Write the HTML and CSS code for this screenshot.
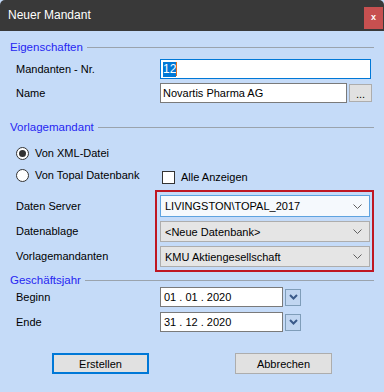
FILE: index.html
```html
<!DOCTYPE html>
<html lang="de">
<head>
<meta charset="UTF-8">
<meta name="viewport" content="width=device-width, initial-scale=1.0">
<title>Neuer Mandant</title>

<link rel="stylesheet" href="styles.css">

</head>
<body>

<div class="window">
  <div class="titlebar">
    <span class="title">Neuer Mandant</span>
    <span class="close">x</span>
  </div>

  <div class="content">
    <div class="group-title">Eigenschaften</div>
    <div class="row first">
      <span class="label">Mandanten - Nr.</span>
      <div class="textbox focus nr"><span class="sel">12</span><span class="caret"></span></div>
    </div>
    <div class="row">
      <span class="label">Name</span>
      <div class="textbox name">Novartis Pharma AG</div>
      <span class="dots">...</span>
    </div>

    <div class="group-title second">Vorlagemandant</div>
    <div class="radio-row xml">
      <span class="radio-cell"><span class="radio checked"></span>Von XML-Datei</span>
    </div>
    <div class="radio-row">
      <span class="radio-cell"><span class="radio"></span>Von Topal Datenbank</span>
      <span class="check-cell"><span class="check"></span>Alle Anzeigen</span>
    </div>

    <div class="db-block">
      <div class="db-labels">
        <span class="l1">Daten Server</span>
        <span>Datenablage</span>
        <span>Vorlagemandanten</span>
      </div>
      <div class="highlight">
        <div class="combo active c1">LIVINGSTON\TOPAL_2017<svg viewBox="0 0 9 5"><path d="M0.5 0.5 L4.5 4.5 L8.5 0.5" /></svg></div>
        <div class="combo">&lt;Neue Datenbank&gt;<svg viewBox="0 0 9 5"><path d="M0.5 0.5 L4.5 4.5 L8.5 0.5" /></svg></div>
        <div class="combo">KMU Aktiengesellschaft<svg viewBox="0 0 9 5"><path d="M0.5 0.5 L4.5 4.5 L8.5 0.5" /></svg></div>
      </div>
    </div>

    <div class="group-title third">Geschäftsjahr</div>
    <div class="row date-row">
      <span class="label">Beginn</span>
      <div class="textbox date">01 . 01 . 2020</div>
      <span class="date-btn"><svg viewBox="0 0 9 6"><path d="M1 1 L4.5 4.5 L8 1" /></svg></span>
    </div>
    <div class="row date-row end">
      <span class="label">Ende</span>
      <div class="textbox date">31 . 12 . 2020</div>
      <span class="date-btn"><svg viewBox="0 0 9 6"><path d="M1 1 L4.5 4.5 L8 1" /></svg></span>
    </div>

    <div class="buttons">
      <button class="btn default">Erstellen</button>
      <button class="btn">Abbrechen</button>
    </div>
  </div>
</div>

</body>
</html>
```

FILE: styles.css
```css
/* Global Styles */
body {
  font-family: "Liberation Sans", Arial, sans-serif;
  font-size: 11px;
  color: #000;
  margin: 0;
  padding: 0;
  background-color: #c5dbf8;
}
.window {
  width: 384px;
  height: 392px;
  background-color: #c5dbf8;
  overflow: hidden;
}

/* Title bar */
.titlebar {
  display: flex;
  height: 31px;
  background-color: #393939;
  color: #fff;
  border-radius: 5px 5px 0 0;
}
.title {
  font-size: 12px;
  line-height: 31px;
  padding-left: 8px;
}
.close {
  margin-left: auto;
  margin-top: 7px;
  margin-right: 1px;
  width: 19px;
  height: 22px;
  background-color: #c75050;
  font-weight: bold;
  font-size: 9px;
  line-height: 21px;
  text-align: center;
}

/* Content */
.content {
  padding: 9px 10px 0 10px;
}
.group-title {
  display: flex;
  align-items: center;
  height: 14px;
  color: #2626f2;
  font-size: 11.5px;
}
.group-title::after {
  content: "";
  flex: 1;
  margin-left: 4px;
  border-top: 1px solid #9aa3ad;
}
.group-title.second {
  margin-top: 17px;
}
.group-title.third {
  margin-top: 1px;
}
.row {
  display: flex;
  align-items: center;
  height: 20px;
  margin-top: 4px;
  padding-left: 6px;
}
.row.first {
  margin-top: 5px;
}
.label {
  width: 144px;
  flex-shrink: 0;
}
.textbox {
  box-sizing: border-box;
  height: 20px;
  background-color: #fff;
  border: 1px solid #7a7a7a;
  padding-left: 2px;
  line-height: 18px;
  display: flex;
  align-items: center;
}
.textbox.focus {
  border-color: #0078d7;
  font-size: 12px;
}
.nr {
  width: 211px;
}
.sel {
  background-color: #0078d7;
  color: #fff;
  line-height: 15px;
}
.caret {
  width: 1px;
  height: 14px;
  background-color: #e07020;
}
.name {
  width: 187px;
}
.dots {
  box-sizing: border-box;
  width: 23px;
  height: 18px;
  margin-left: 2px;
  background-color: #e1e1e1;
  border: 1px solid #adadad;
  text-align: center;
  line-height: 18px;
}

/* Radio buttons */
.radio-row {
  display: flex;
  align-items: center;
  height: 20px;
  margin-top: 2px;
  padding-left: 6px;
}
.radio-row.xml {
  margin-top: 9px;
}
.radio-cell {
  display: flex;
  align-items: center;
  width: 146px;
}
.radio {
  box-sizing: border-box;
  width: 13px;
  height: 13px;
  border: 1px solid #333;
  border-radius: 50%;
  background-color: #fff;
  margin-right: 6px;
  display: flex;
  align-items: center;
  justify-content: center;
}
.radio.checked::after {
  content: "";
  width: 7px;
  height: 7px;
  border-radius: 50%;
  background-color: #333;
}
.check-cell {
  display: flex;
  align-items: center;
  margin-top: 4px;
}
.check {
  box-sizing: border-box;
  width: 13px;
  height: 13px;
  border: 1px solid #333;
  background-color: #fff;
  margin-right: 6px;
}

/* Database combos */
.db-block {
  display: flex;
  margin-top: 5px;
  padding-left: 6px;
}
.db-labels {
  width: 139px;
  display: flex;
  flex-direction: column;
  gap: 4px;
  padding-top: 5px;
}
.db-labels span {
  height: 21px;
  line-height: 21px;
}
.db-labels .l1 {
  height: 22px;
  line-height: 22px;
}
.highlight {
  box-sizing: border-box;
  width: 219px;
  border: 2px solid #bf1622;
  padding: 3px 2px 3px 3px;
  display: flex;
  flex-direction: column;
  gap: 4px;
}
.combo {
  box-sizing: border-box;
  height: 21px;
  display: flex;
  align-items: center;
  justify-content: space-between;
  padding: 0 7px 0 4px;
  background-color: #e5e5e5;
  border: 1px solid #adadad;
}
.combo.c1 {
  height: 22px;
}
.combo.active {
  background-color: #f5f9fd;
  border-color: #5ea3e0;
}
.combo svg {
  width: 9px;
  height: 5px;
  fill: none;
  stroke: #606060;
  stroke-width: 1;
}

/* Dates */
.date-row {
  margin-top: 0;
}
.date-row.end {
  margin-top: 5px;
}
.date {
  width: 123px;
  padding-left: 3px;
}
.date-btn {
  box-sizing: border-box;
  width: 16px;
  height: 17px;
  margin-left: 2px;
  background-color: #c1d6f1;
  border: 1px solid #7f9db9;
  display: flex;
  align-items: center;
  justify-content: center;
}
.date-btn svg {
  width: 9px;
  height: 6px;
  fill: none;
  stroke: #3b5a8a;
  stroke-width: 2;
}

/* Buttons */
.buttons {
  display: flex;
  gap: 86px;
  margin-top: 21px;
  padding-left: 42px;
}
.btn {
  box-sizing: border-box;
  width: 97px;
  height: 21px;
  background-color: #e1e1e1;
  border: 1px solid #adadad;
  font-family: "Liberation Sans", Arial, sans-serif;
  font-size: 11px;
  color: #000;
  padding: 0;
}
.btn.default {
  border: 2px solid #0078d7;
}
```
